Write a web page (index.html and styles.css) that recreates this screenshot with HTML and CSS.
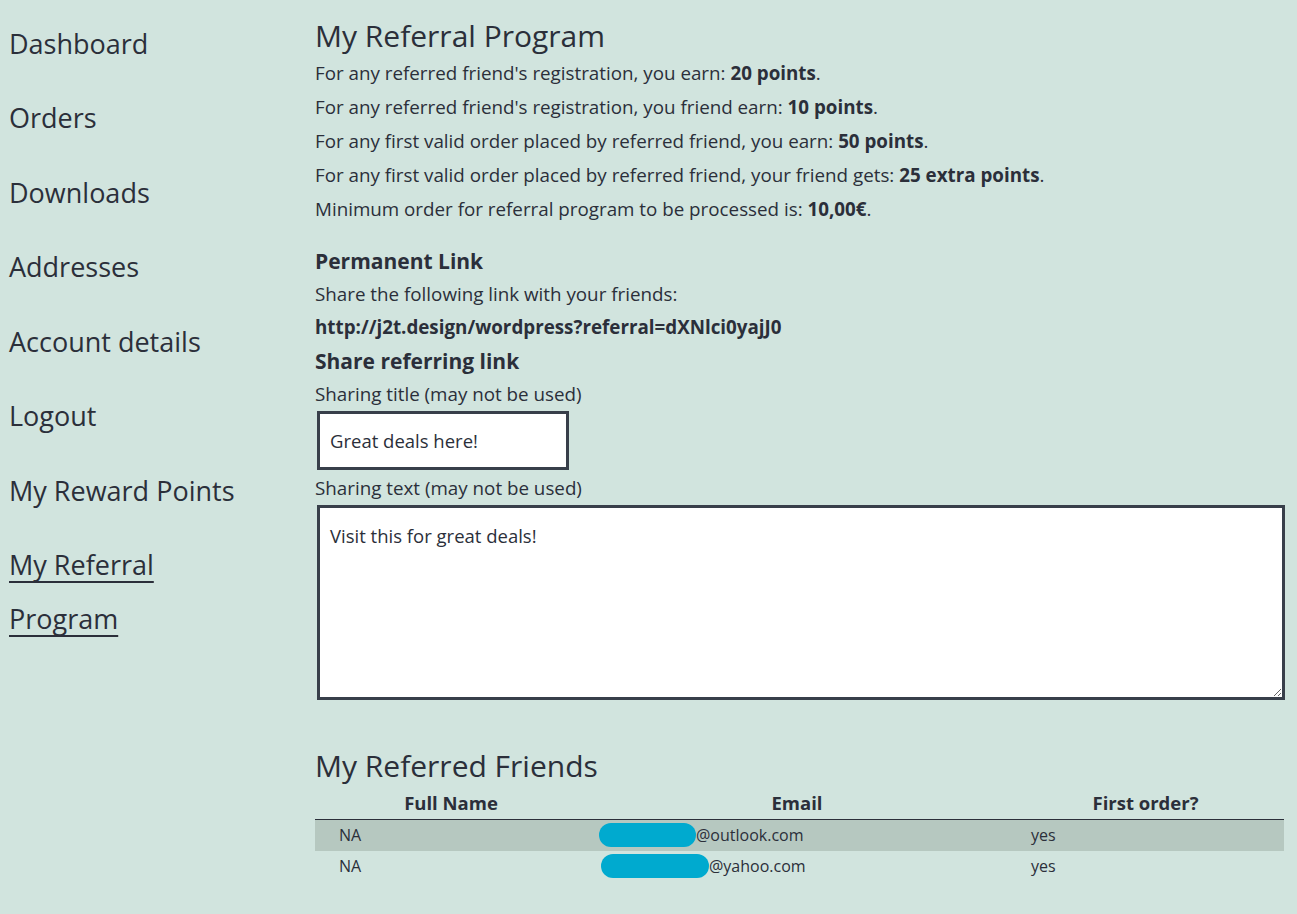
FILE: index.html
```html
<!DOCTYPE html>
<html>
<head>
<meta charset="utf-8">
<link rel="stylesheet" href="styles.css">
</head>
<body>
<div class="page">
  <nav class="side">
    <a class="nav-item" href="#">Dashboard</a>
    <a class="nav-item" href="#">Orders</a>
    <a class="nav-item" href="#">Downloads</a>
    <a class="nav-item" href="#">Addresses</a>
    <a class="nav-item" href="#">Account details</a>
    <a class="nav-item" href="#">Logout</a>
    <a class="nav-item" href="#">My Reward Points</a>
    <a class="nav-item active" href="#">My Referral Program</a>
  </nav>
  <main class="content">
    <h2 class="title">My Referral Program</h2>
    <p class="rule">For any referred friend's registration, you earn: <b>20 points</b>.</p>
    <p class="rule">For any referred friend's registration, you friend earn: <b>10 points</b>.</p>
    <p class="rule">For any first valid order placed by referred friend, you earn: <b>50 points</b>.</p>
    <p class="rule">For any first valid order placed by referred friend, your friend gets: <b>25 extra points</b>.</p>
    <p class="rule">Minimum order for referral program to be processed is: <b>10,00€</b>.</p>

    <h3 class="sub first">Permanent Link</h3>
    <p class="line">Share the following link with your friends:</p>
    <p class="line link">http://j2t.design/wordpress?referral=dXNlci0yajJ0</p>
    <h3 class="sub">Share referring link</h3>
    <label class="line">Sharing title (may not be used)</label>
    <input class="field" type="text" value="Great deals here!">
    <label class="line">Sharing text (may not be used)</label>
    <textarea class="area">Visit this for great deals!</textarea>

    <h2 class="title friends">My Referred Friends</h2>
    <table class="tbl">
      <colgroup><col class="c1"><col class="c2"><col class="c3"></colgroup>
      <thead>
        <tr><th>Full Name</th><th>Email</th><th>First order?</th></tr>
      </thead>
      <tbody>
        <tr class="odd"><td>NA</td><td class="mail"><span class="blur b1"></span>@outlook.com</td><td>yes</td></tr>
        <tr><td>NA</td><td class="mail"><span class="blur b2"></span>@yahoo.com</td><td>yes</td></tr>
      </tbody>
    </table>
  </main>
</div>
</body>
</html>
```

FILE: styles.css
```css
html, body {
  margin: 0;
  padding: 0;
  background: #d1e4de;
}
body {
  font-family: "Open Sans", "Noto Sans", sans-serif;
  color: #2b2f3a;
}
.page {
  display: flex;
  padding: 0 0 0 9px;
}
.side {
  width: 276px;
  flex: none;
  display: flex;
  flex-direction: column;
  align-items: flex-start;
  padding-top: 17px;
  gap: 20.45px;
}
.nav-item {
  font-size: 27px;
  line-height: 54px;
  color: #2b2f3a;
  text-decoration: none;
  max-width: 250px;
}
.nav-item.active {
  text-decoration: underline;
  text-decoration-thickness: 2px;
  text-underline-offset: 6px;
}
.content {
  flex: 1;
  padding: 0 13px 40px 30px;
  display: flex;
  flex-direction: column;
  align-items: flex-start;
}
.title {
  font-size: 30px;
  font-weight: 400;
  margin: 16px 0 0;
  line-height: 40px;
}
.rule {
  margin: 0;
  font-size: 18.8px;
  line-height: 34px;
}
.rule b, .link {
  font-weight: 700;
}
.sub {
  font-size: 21px;
  font-weight: 700;
  margin: 0;
  line-height: 34px;
}
.sub.first {
  margin-top: 18px;
}
.line {
  font-size: 18.8px;
  line-height: 33px;
  margin: 0;
}
.field {
  box-sizing: border-box;
  width: 252px;
  height: 59px;
  margin: 0 0 2px 2px;
  border: 3px solid #383f4a;
  background: #fff;
  font: inherit;
  font-size: 18.5px;
  color: #2b2f3a;
  padding: 0 10px;
  outline: none;
}
.area {
  box-sizing: border-box;
  width: calc(100% - 1px);
  height: 195px;
  margin: 0 0 0 2px;
  border: 3px solid #383f4a;
  background: #fff;
  font: inherit;
  font-size: 18.5px;
  line-height: 24px;
  color: #2b2f3a;
  padding: 16px 10px;
  outline: none;
}
.title.friends {
  margin-top: 46px;
}
.tbl {
  width: 100%;
  border-collapse: collapse;
  margin-top: 3px;
  font-size: 16px;
}
.c1 { width: 272px; }
.c2 { width: 420px; }
.tbl th {
  font-size: 18.5px;
  font-weight: 700;
  text-align: center;
  line-height: 28px;
  padding: 0 0 2px;
  border-bottom: 1px solid #2b2f3a;
}
.tbl td {
  text-align: left;
  padding: 0 24px;
  line-height: 31px;
}
.tbl td.mail {
  padding-left: 12px;
}
.tbl tr.odd td {
  background: #b6c8c0;
}
.blur {
  display: inline-block;
  vertical-align: middle;
  height: 24px;
  background: #00aacf;
  border-radius: 12px;
  margin-top: -4px;
}
.b1 { width: 97px; }
.b2 { width: 108px; margin-left: 2px; }
```
